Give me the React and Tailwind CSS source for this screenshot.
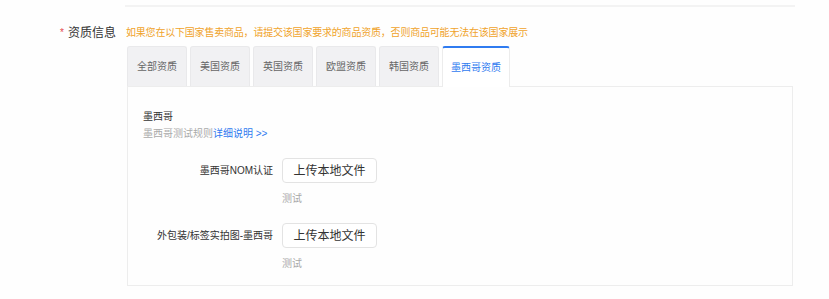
import React from 'react';

const tabs = ['全部资质', '美国资质', '英国资质', '欧盟资质', '韩国资质', '墨西哥资质'];

const UploadRow = ({ label }) => (
  <div className="flex">
    <div className="w-[154px] pr-[9px] text-right text-[10px] text-[#333] leading-[25px] whitespace-nowrap">{label}</div>
    <div className="flex flex-col">
      <button className="w-[95px] h-[25px] rounded-[4px] border border-[#e3e3e3] bg-white text-[12px] text-[#333] leading-none">
        上传本地文件
      </button>
      <div className="mt-[9px] text-[10px] leading-[14px] text-[#a8a8a8]">测试</div>
    </div>
  </div>
);

const App = () => {
  const active = 5;
  return (
    <div
      className="w-[829px] h-[299px] bg-[#fefefe] overflow-hidden"
      style={{ fontFamily: '"Liberation Sans", "Noto Sans CJK SC", sans-serif' }}
    >
      <div className="ml-[125px] w-[670px] h-[7px] border-b-2 border-[#f3f3f3]" />

      <div className="flex mt-[19px]">
        <div className="w-[126px] pr-[10px] flex justify-end items-center gap-[4px] h-[14px]">
          <span className="text-[#e5484d] text-[10px] leading-none">*</span>
          <span className="text-[12px] text-[#333] leading-none">资质信息</span>
        </div>
        <div className="text-[10px] leading-[14px] text-[#f0a32b] whitespace-nowrap tracking-[-0.2px]">
          如果您在以下国家售卖商品，请提交该国家要求的商品资质，否则商品可能无法在该国家展示
        </div>
      </div>

      <div className="ml-[127px] mt-[6px]">
        <div className="flex gap-[3px] items-end relative z-10">
          {tabs.map((t, i) =>
            i === active ? (
              <div
                key={t}
                className="w-[68px] h-[41px] -mb-px bg-white border border-[#ececec] border-b-0 border-t-2 border-t-[#2f7bf0] rounded-t-[3px] flex items-center justify-center text-[10px] text-[#2f7bf0]"
              >
                {t}
              </div>
            ) : (
              <div
                key={t}
                className="w-[60px] h-[40px] bg-[#f1f1f3] border border-[#e9e9eb] border-b-0 rounded-t-[3px] flex items-center justify-center text-[10px] text-[#666]"
              >
                {t}
              </div>
            )
          )}
        </div>

        <div className="w-[666px] h-[200px] border border-[#ededed] bg-[#fefefe]">
          <div className="pl-[15px] pt-[23px]">
            <div className="text-[10px] leading-[14px] text-[#333]">墨西哥</div>
            <div className="mt-[3px] text-[10px] leading-[14px] text-[#aaa]">
              墨西哥测试规则<span className="text-[#2f7bf0]">详细说明 &gt;&gt;</span>
            </div>
          </div>
          <div className="mt-[17px] flex flex-col gap-[17px]">
            <UploadRow label="墨西哥NOM认证" />
            <UploadRow label="外包装/标签实拍图-墨西哥" />
          </div>
        </div>
      </div>
    </div>
  );
};

export default App;
